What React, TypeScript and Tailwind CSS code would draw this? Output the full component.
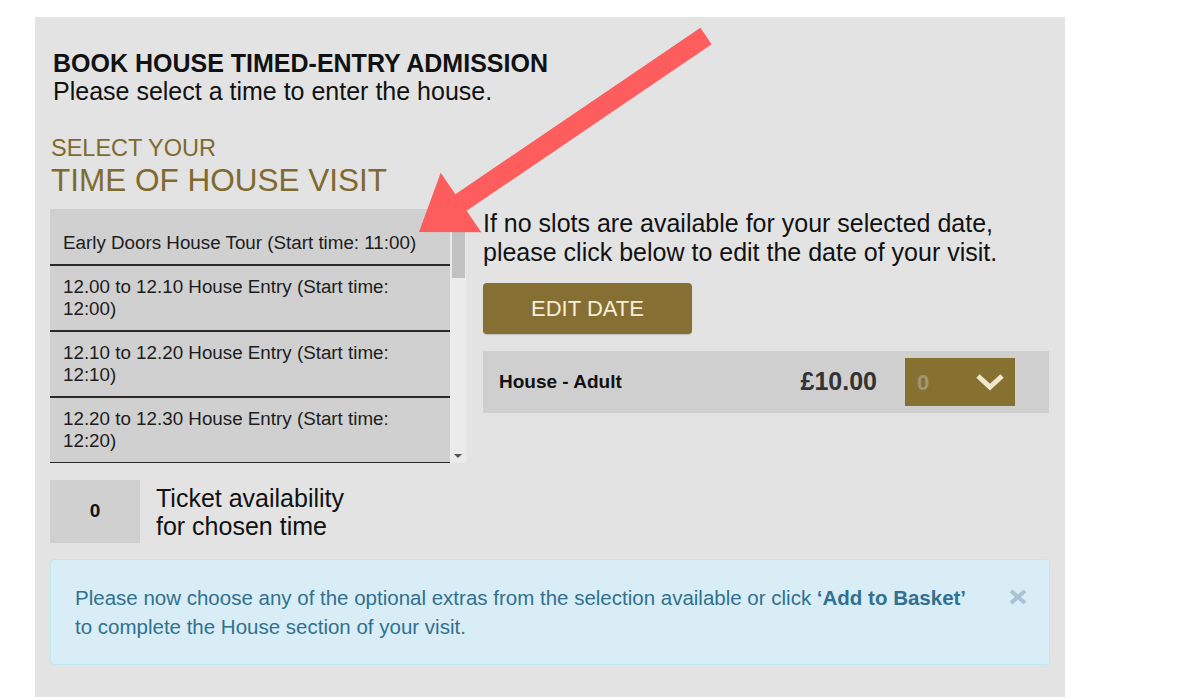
import React from 'react';

const slots = [
  { label: 'Early Doors House Tour (Start time: 11:00)', first: true },
  { label: '12.00 to 12.10 House Entry (Start time: 12:00)' },
  { label: '12.10 to 12.20 House Entry (Start time: 12:10)' },
  { label: '12.20 to 12.30 House Entry (Start time: 12:20)' },
];

function Arrow() {
  return (
    <svg className="absolute left-0 top-0 pointer-events-none" width="1200" height="700" viewBox="0 0 1200 700">
      <polygon
        points="700.4,27.8 711.6,44.2 466.6,210.8 481.3,232.2 419,232 440.7,172.8 455.4,194.2"
        fill="#fd5d5d"
      />
    </svg>
  );
}

function SlotList() {
  return (
    <div className="flex h-[254px] w-[416px]">
      <div className="w-[400px] overflow-hidden">
        {slots.map((s) => (
          <div
            key={s.label}
            className={`bg-[#d0d0d0] border-b-2 border-[#2a2a2a] pl-[13px] pr-[20px] pb-[10px] text-[18.8px] leading-[22px] text-[#1c1c1c] ${
              s.first ? 'pt-[23px]' : 'pt-[10px]'
            }`}
          >
            {s.label}
          </div>
        ))}
      </div>
      {/* fake scrollbar */}
      <div className="w-[16px] h-full bg-[#ebebeb] flex flex-col items-center">
        <div className="h-[23px]" />
        <div className="w-[13px] h-[46px] bg-[#c2c2c2]" />
        <div className="flex-1" />
        <div className="mb-[5px] w-0 h-0 border-l-[4px] border-r-[4px] border-t-[4px] border-l-transparent border-r-transparent border-t-[#555]" />
      </div>
    </div>
  );
}

export default function App() {
  return (
    <div className="relative w-[1200px] h-[700px] bg-white overflow-hidden" style={{ fontFamily: '"Liberation Sans", Arial, sans-serif' }}>
      <div className="ml-[35px] mt-[17px] w-[1030px] h-[680px] bg-[#e3e3e3] px-[15px] pt-[32px]">
        <div className="pl-[3px] text-[25px] leading-[28px] text-[#111]">
          <div className="font-bold">BOOK HOUSE TIMED-ENTRY ADMISSION</div>
          <div>Please select a time to enter the house.</div>
        </div>

        <div className="mt-[30px] pl-[1px] text-[#7f6a2f]">
          <div className="text-[23.5px] leading-[27px]">SELECT YOUR</div>
          <div className="text-[31.5px] leading-[36px]">TIME OF HOUSE VISIT</div>
        </div>

        <div className="mt-[11px] flex gap-[17px]">
          <div className="w-[416px]">
            <SlotList />
            <div className="mt-[17px] flex items-center gap-[16px]">
              <div className="w-[90px] h-[63px] bg-[#d0d0d0] flex items-center justify-center font-bold text-[19px] text-[#111]">
                0
              </div>
              <div className="text-[25px] leading-[28px] text-[#111]">
                Ticket availability
                <br />
                for chosen time
              </div>
            </div>
          </div>

          <div className="w-[566px]">
            <div className="text-[25px] leading-[29px] text-[#111]">
              If no slots are available for your selected date,
              <br />
              please click below to edit the date of your visit.
            </div>
            <button className="mt-[16px] w-[209px] h-[51px] rounded-[4px] bg-[#866f33] text-[22px] text-[#f6efd8] shadow-[0_1px_1px_rgba(0,0,0,0.15)]">
              EDIT DATE
            </button>
            <div className="mt-[17px] h-[62px] bg-[#cfcfcf] flex items-center pl-[16px] pr-[34px]">
              <div className="font-bold text-[19px] text-[#111]">House - Adult</div>
              <div className="ml-auto font-bold text-[25px] text-[#333]">£10.00</div>
              <div className="ml-[28px] w-[110px] h-[48px] bg-[#877131] flex items-center pl-[12px] pr-[10px]">
                <span className="font-bold text-[22px] text-[#a39572]">0</span>
                <svg className="ml-auto" width="30" height="18" viewBox="0 0 30 18">
                  <polyline points="3,3 15,14 27,3" fill="none" stroke="#f1e7cd" strokeWidth="5" />
                </svg>
              </div>
            </div>
          </div>
        </div>

        <div className="relative mt-[16px] border border-[#bce8f1] bg-[#d9edf7] rounded-[4px] pl-[24px] pr-[73px] py-[23px] text-[20.5px] leading-[29px] text-[#31708f]">
          Please now choose any of the optional extras from the selection available or click{' '}
          <b>‘Add to Basket’</b> to complete the House section of your visit.
          <svg className="absolute right-[22px] top-[29px]" width="18" height="16" viewBox="0 0 18 16">
            <line x1="2" y1="2" x2="16" y2="14" stroke="#a7c5d5" strokeWidth="4" />
            <line x1="16" y1="2" x2="2" y2="14" stroke="#a7c5d5" strokeWidth="4" />
          </svg>
        </div>
      </div>
      <Arrow />
    </div>
  );
}
